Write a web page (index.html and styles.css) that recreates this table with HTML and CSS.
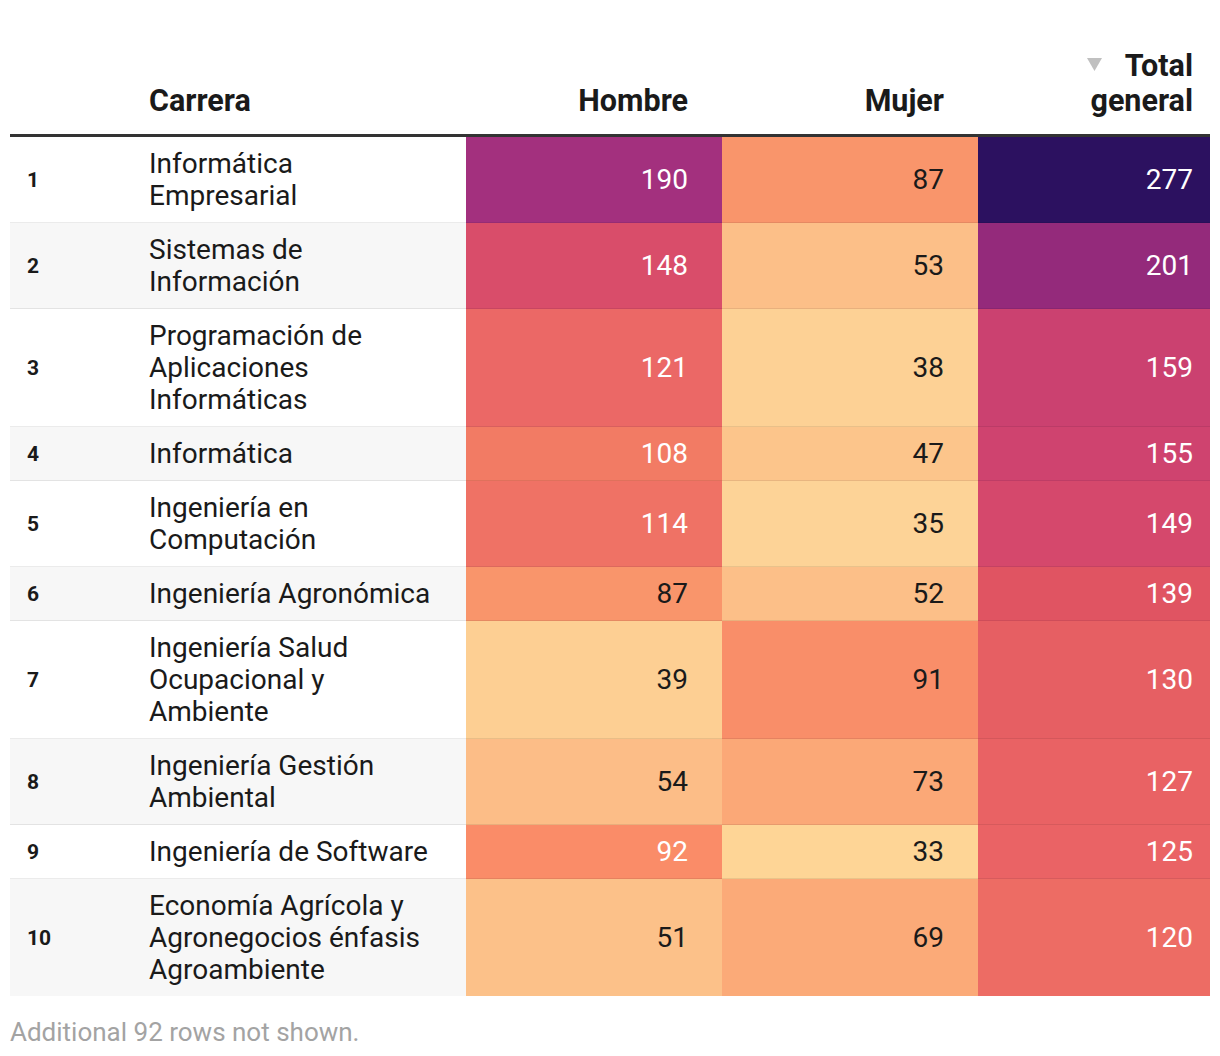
FILE: index.html
```html
<!DOCTYPE html>
<html lang="es">
<head>
<meta charset="utf-8">
<link rel="stylesheet" href="styles.css">
</head>
<body>
<div class="wrap">
<table class="tbl">
<colgroup>
<col class="c-rank"><col class="c-name"><col class="c-num"><col class="c-num"><col class="c-total">
</colgroup>
<thead>
<tr>
<th></th>
<th class="h-name">Carrera</th>
<th class="h-num">Hombre</th>
<th class="h-num">Mujer</th>
<th class="h-num h-total"><span class="sort"><svg width="15" height="13" viewBox="0 0 15 13"><polygon points="0,0 15,0 7.5,13" fill="#c0c0c0"/></svg></span>Total<br>general</th>
</tr>
</thead>
<tbody>
<tr><td class="rank">1</td><td class="name">Informática<br>Empresarial</td><td class="num light" style="background:#a3307e">190</td><td class="num" style="background:#f9956b">87</td><td class="num tot light" style="background:#2c1160">277</td></tr>
<tr class="alt"><td class="rank">2</td><td class="name">Sistemas de<br>Información</td><td class="num light" style="background:#d94d6a">148</td><td class="num" style="background:#fcbf88">53</td><td class="num tot light" style="background:#942a7b">201</td></tr>
<tr><td class="rank">3</td><td class="name">Programación de<br>Aplicaciones<br>Informáticas</td><td class="num light" style="background:#eb6866">121</td><td class="num" style="background:#fdd195">38</td><td class="num tot light" style="background:#cb4170">159</td></tr>
<tr class="alt"><td class="rank">4</td><td class="name">Informática</td><td class="num light" style="background:#f27b64">108</td><td class="num" style="background:#fcc58b">47</td><td class="num tot light" style="background:#cf436f">155</td></tr>
<tr><td class="rank">5</td><td class="name">Ingeniería en<br>Computación</td><td class="num light" style="background:#ef7265">114</td><td class="num" style="background:#fdd397">35</td><td class="num tot light" style="background:#d5486c">149</td></tr>
<tr class="alt"><td class="rank">6</td><td class="name">Ingeniería Agronómica</td><td class="num" style="background:#f9956b">87</td><td class="num" style="background:#fcbf88">52</td><td class="num tot light" style="background:#e05462">139</td></tr>
<tr><td class="rank">7</td><td class="name">Ingeniería Salud<br>Ocupacional y<br>Ambiente</td><td class="num" style="background:#fdcf93">39</td><td class="num" style="background:#f98e69">91</td><td class="num tot light" style="background:#e65f63">130</td></tr>
<tr class="alt"><td class="rank">8</td><td class="name">Ingeniería Gestión<br>Ambiental</td><td class="num" style="background:#fcbd87">54</td><td class="num" style="background:#fba877">73</td><td class="num tot light" style="background:#e96264">127</td></tr>
<tr><td class="rank">9</td><td class="name">Ingeniería de Software</td><td class="num light" style="background:#fa8c68">92</td><td class="num" style="background:#fed596">33</td><td class="num tot light" style="background:#ea6365">125</td></tr>
<tr class="alt"><td class="rank">10</td><td class="name">Economía Agrícola y<br>Agronegocios énfasis<br>Agroambiente</td><td class="num" style="background:#fcc189">51</td><td class="num" style="background:#fbaa78">69</td><td class="num tot light" style="background:#ed6c64">120</td></tr>
</tbody>
</table>
<p class="note">Additional 92 rows not shown.</p>
</div>
</body>
</html>
```

FILE: styles.css
```css
html, body {
  margin: 0;
  padding: 0;
  background: #ffffff;
}
body {
  font-family: Roboto, "Liberation Sans", Arial, sans-serif;
  color: #1a1a1a;
}
.wrap {
  padding: 48px 10px 0 10px;
}
.tbl {
  width: 1200px;
  border-collapse: collapse;
  table-layout: fixed;
}
.c-rank { width: 129px; }
.c-name { width: 327px; }
.c-num { width: 256px; }
.c-total { width: 232px; }

.tbl th {
  font-weight: 700;
  font-size: 30.5px;
  line-height: 35px;
  color: #1a1a1a;
  vertical-align: bottom;
  padding: 0 0 16px 0;
  border-bottom: 3px solid #333333;
}
.h-name {
  text-align: left;
  padding-left: 10px !important;
}
.h-num {
  text-align: right;
  padding-right: 34px !important;
}
.h-total {
  padding-right: 17px !important;
}
.sort {
  display: inline-block;
  margin-right: 23px;
  vertical-align: 5px;
  line-height: 0;
}
.tbl td {
  font-size: 28px;
  line-height: 32px;
  padding: 11px 0 10px 0;
  border-bottom: 1px solid rgba(0, 0, 0, 0.08);
  vertical-align: middle;
}
.tbl tr:last-child td {
  border-bottom: none;
}
.alt td {
  background: #f7f7f7;
}
.rank {
  font-weight: 700;
  font-size: 21px !important;
  padding-left: 17px !important;
}
.name {
  padding-left: 10px !important;
}
.num {
  text-align: right;
  padding-right: 34px !important;
  color: #1a1a1a;
}
.num.tot {
  padding-right: 17px !important;
}
.light {
  color: #ffffff;
}
.note {
  margin: 20px 0 0 0;
  font-size: 26px;
  line-height: 32px;
  color: #a3a3a3;
}
```
